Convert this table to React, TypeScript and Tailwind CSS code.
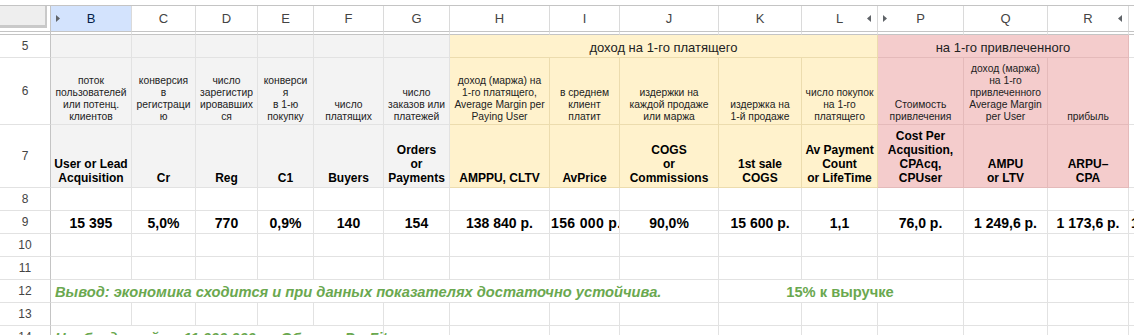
import React from "react";

const FONT = "font-['Liberation_Sans',Arial,sans-serif]";
const ROWHDR =
  "flex items-center justify-center border-r border-b border-r-[#c4c4c4] border-b-[#e2e2e2] text-[12px] text-[#444]";
const W = "min-w-0 border-r border-b border-[#e2e2e2]";
const G = "min-w-0 border-r border-b border-[#e2e2e2] bg-[#f3f3f3]";
const Y = "min-w-0 border-r border-b border-[#ecdcae] bg-[#fff2cc]";
const P = "min-w-0 border-r border-b border-[#e4baba] bg-[#f4cccc]";

const HDR =
  "grid grid-cols-[1fr_auto_1fr] items-center border-r border-b border-r-[#dadada] border-b-[#c4c4c4] text-[13px]";

const R6 =
  "flex flex-col items-center justify-end pb-[1px] text-[10.3px] leading-[12px] text-center whitespace-nowrap text-[#222]";
const R7 =
  "flex flex-col items-center justify-end pb-[2px] text-[12px] leading-[14px] text-center font-bold whitespace-nowrap text-black";
const R9 =
  "flex items-end justify-center pb-[2px] text-[14px] leading-[16px] font-bold whitespace-nowrap text-black overflow-hidden";

function TriR() {
  return (
    <svg width="4" height="7" viewBox="0 0 4 7" className="block">
      <polygon points="0,0 4,3.5 0,7" fill="#5f6368" />
    </svg>
  );
}
function TriL() {
  return (
    <svg width="4" height="7" viewBox="0 0 4 7" className="block">
      <polygon points="4,0 0,3.5 4,7" fill="#5f6368" />
    </svg>
  );
}

function Lines({ lines }: { lines: string[] }) {
  return (
    <>
      {lines.map((l, i) => (
        <div key={i}>{l}</div>
      ))}
    </>
  );
}

const letters = ["C", "D", "E", "F", "G", "H", "I", "J", "K"];

const row6Gray: string[][] = [
  ["поток", "пользователей", "или потенц.", "клиентов"],
  ["конверсия", "в", "регистраци", "ю"],
  ["число", "зарегистир", "ировавших", "ся"],
  ["конверси", "я", "в 1-ю", "покупку"],
  ["число", "платящих"],
  ["число", "заказов или", "платежей"],
];
const row6Yellow: string[][] = [
  ["доход (маржа) на", "1-го платящего,", "Average Margin per", "Paying User"],
  ["в среднем", "клиент", "платит"],
  ["издержки на", "каждой продаже", "или маржа"],
  ["издержка на", "1-й продаже"],
  ["число покупок", "на 1-го", "платящего"],
];
const row6Pink: string[][] = [
  ["Стоимость", "привлечения"],
  ["доход (маржа)", "на 1-го", "привлеченного", "Average Margin", "per User"],
  ["прибыль"],
];

const row7Gray: string[][] = [
  ["User or Lead", "Acquisition"],
  ["Cr"],
  ["Reg"],
  ["C1"],
  ["Buyers"],
  ["Orders", "or", "Payments"],
];
const row7Yellow: string[][] = [
  ["AMPPU, CLTV"],
  ["AvPrice"],
  ["COGS", "or", "Commissions"],
  ["1st sale", "COGS"],
  ["Av Payment", "Count", "or LifeTime"],
];
const row7Pink: string[][] = [
  ["Cost Per", "Acqusition,", "CPAcq,", "CPUser"],
  ["AMPU", "or LTV"],
  ["ARPU–", "CPA"],
];

function EmptyRow({ n }: { n: number }) {
  return (
    <>
      <div className={ROWHDR}>{n}</div>
      {Array.from({ length: 15 }).map((_, i) => (
        <div key={i} className={W} />
      ))}
    </>
  );
}

export default function App() {
  return (
    <div className={`w-[1134px] h-[335px] overflow-hidden bg-white ${FONT}`}>
      <div className="h-[5px]" />
      <div className="h-px bg-[#c4c4c4] w-[1229px]" />
      <div className="grid w-[1229px] grid-cols-[51px_81px_64px_62px_56px_70px_66px_100px_70px_99px_83px_76px_86px_84px_81px_100px] grid-rows-[26px_3px_23px_67px_63px_23px_23px_23px_23px_23px_23px_23px]">
        {/* Column header row */}
        <div className="border-r border-b border-r-[#c4c4c4] border-b-[#c4c4c4]">
          <div className="w-[47px] h-[22px] bg-[#eeeeee] border-r-[2px] border-b-[3px] border-[#c9c9c9]" />
        </div>
        <div className={`${HDR} bg-[#d3e3fd] text-[#041e49]`}>
          <div className="pl-[5px]">
            <TriR />
          </div>
          <div>B</div>
          <div />
        </div>
        {letters.map((l) => (
          <div key={l} className={`${HDR} text-[#444]`}>
            <div />
            <div>{l}</div>
            <div />
          </div>
        ))}
        <div className={`${HDR} text-[#444]`}>
          <div />
          <div>L</div>
          <div className="flex justify-end pr-[6px]">
            <TriL />
          </div>
        </div>
        <div className={`${HDR} text-[#444]`}>
          <div className="pl-[5px]">
            <TriR />
          </div>
          <div>P</div>
          <div />
        </div>
        <div className={`${HDR} text-[#444]`}>
          <div />
          <div>Q</div>
          <div />
        </div>
        <div className={`${HDR} text-[#444]`}>
          <div />
          <div>R</div>
          <div className="flex justify-end pr-[6px]">
            <TriL />
          </div>
        </div>
        <div className={`${HDR} text-[#444]`} />

        {/* gap row */}
        <div className="border-r border-b border-[#c4c4c4]" />
        {Array.from({ length: 15 }).map((_, i) => (
          <div key={i} className="border-r border-b border-r-[#e2e2e2] border-b-[#c4c4c4]" />
        ))}

        {/* Row 5 */}
        <div className={ROWHDR}>5</div>
        {Array.from({ length: 6 }).map((_, i) => (
          <div key={i} className={G} />
        ))}
        <div
          className={`${Y} col-span-5 flex items-end justify-center pb-[2px] text-[13px] leading-[15px] text-[#222]`}
        >
          доход на 1-го платящего
        </div>
        <div
          className={`${P} col-span-3 flex items-end justify-center pb-[2px] text-[13px] leading-[15px] text-[#222]`}
        >
          на 1-го привлеченного
        </div>
        <div className={W} />

        {/* Row 6 */}
        <div className={ROWHDR}>6</div>
        {row6Gray.map((ls, i) => (
          <div key={i} className={`${G} ${R6}`}>
            <Lines lines={ls} />
          </div>
        ))}
        {row6Yellow.map((ls, i) => (
          <div key={i} className={`${Y} ${R6}`}>
            <Lines lines={ls} />
          </div>
        ))}
        {row6Pink.map((ls, i) => (
          <div key={i} className={`${P} ${R6}`}>
            <Lines lines={ls} />
          </div>
        ))}
        <div className={W} />

        {/* Row 7 */}
        <div className={ROWHDR}>7</div>
        {row7Gray.map((ls, i) => (
          <div key={i} className={`${G} ${R7}`}>
            <Lines lines={ls} />
          </div>
        ))}
        {row7Yellow.map((ls, i) => (
          <div key={i} className={`${Y} ${R7}`}>
            <Lines lines={ls} />
          </div>
        ))}
        {row7Pink.map((ls, i) => (
          <div key={i} className={`${P} ${R7}`}>
            <Lines lines={ls} />
          </div>
        ))}
        <div className={W} />

        {/* Row 8 */}
        <EmptyRow n={8} />

        {/* Row 9 */}
        <div className={ROWHDR}>9</div>
        <div className={`${W} ${R9}`}>15 395</div>
        <div className={`${W} ${R9}`}>5,0%</div>
        <div className={`${W} ${R9}`}>770</div>
        <div className={`${W} ${R9}`}>0,9%</div>
        <div className={`${W} ${R9}`}>140</div>
        <div className={`${W} ${R9}`}>154</div>
        <div className={`${W} ${R9}`}>138 840 р.</div>
        <div className={`${W} flex items-end justify-start pb-[2px] pl-[1px] text-[14px] leading-[16px] font-bold tracking-[0.35px] whitespace-nowrap text-black overflow-hidden`}>
          156 000 р.
        </div>
        <div className={`${W} ${R9}`}>90,0%</div>
        <div className={`${W} ${R9}`}>15 600 р.</div>
        <div className={`${W} ${R9}`}>1,1</div>
        <div className={`${W} ${R9}`}>76,0 р.</div>
        <div className={`${W} ${R9}`}>1 249,6 р.</div>
        <div className={`${W} ${R9}`}>1 173,6 р.</div>
        <div className={`${W} flex items-end justify-start pb-[2px] pl-[2px] text-[14px] leading-[16px] font-bold whitespace-nowrap text-black overflow-hidden`}>
          1 098,4 р.
        </div>

        {/* Rows 10, 11 */}
        <EmptyRow n={10} />
        <EmptyRow n={11} />

        {/* Row 12 */}
        <div className={ROWHDR}>12</div>
        <div className={`${W} col-span-9 flex items-end pb-[2px] pl-[4px] text-[14.7px] leading-[16px] font-bold italic whitespace-nowrap text-[#6aa84f]`}>
          Вывод: экономика сходится и при данных показателях достаточно устойчива.
        </div>
        <div className="min-w-0 border-b border-[#e2e2e2]" />
        <div className="min-w-0 border-b border-[#e2e2e2] flex items-end justify-center pb-[2px] text-[14.7px] leading-[16px] font-bold whitespace-nowrap text-[#6aa84f]">
          <span>15% к выручке</span>
        </div>
        <div className={W} />
        <div className={W} />
        <div className={W} />
        <div className={W} />

        {/* Row 13 */}
        <EmptyRow n={13} />

        {/* Row 14 */}
        <div className={ROWHDR}>14</div>
        <div className={`${W} col-span-5 flex items-end pb-[2px] pl-[4px] text-[14.7px] leading-[16px] font-bold italic whitespace-pre text-[#6aa84f]`}>
          {"Необходимый      11 000 000      Oборот ProFit"}
        </div>
        {Array.from({ length: 10 }).map((_, i) => (
          <div key={i} className={W} />
        ))}
      </div>
    </div>
  );
}
